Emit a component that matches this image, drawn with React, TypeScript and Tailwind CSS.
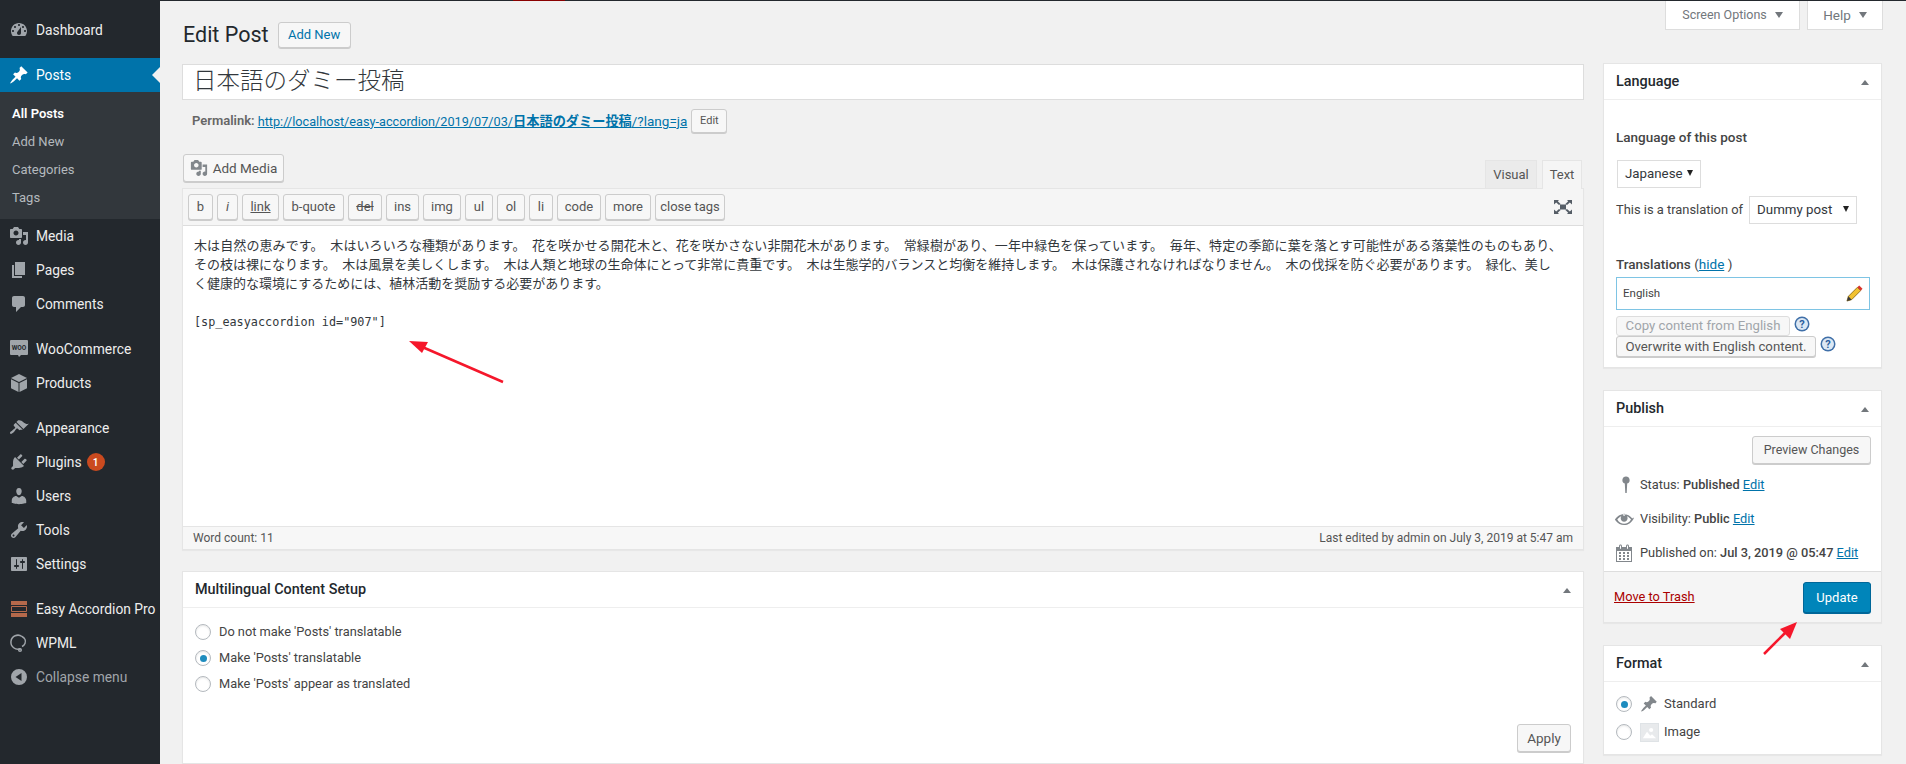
import type { ReactNode } from 'react';

// Dashicons style paths, 20x20 viewbox
const icons: Record<string, string> = {
    dashboard:
        'M3.76 16h12.48c1.1-1.37 1.76-3.11 1.76-5 0-4.42-3.58-8-8-8s-8 3.58-8 8c0 1.89.66 3.63 1.76 5zM10 4c.55 0 1 .45 1 1s-.45 1-1 1-1-.45-1-1 .45-1 1-1zM6 6c.55 0 1 .45 1 1s-.45 1-1 1-1-.45-1-1 .45-1 1-1zm8 0c.55 0 1 .45 1 1s-.45 1-1 1-1-.45-1-1 .45-1 1-1zm-5.37 5.55L12 7v6c0 1.1-.9 2-2 2s-2-.9-2-2c0-.57.24-1.08.63-1.45zM4 10c.55 0 1 .45 1 1s-.45 1-1 1-1-.45-1-1 .45-1 1-1zm12 0c.55 0 1 .45 1 1s-.45 1-1 1-1-.45-1-1 .45-1 1-1z',
    pin: 'M10.44 3.02l1.82-1.82 6.36 6.35-1.83 1.82c-1.05-.68-2.48-.57-3.41.36l-.75.75c-.92.93-1.04 2.35-.35 3.41l-1.83 1.82-2.41-2.41-2.8 2.79c-.42.42-3.38 2.71-3.8 2.29s1.86-3.39 2.28-3.81l2.79-2.79L4.1 9.36l1.83-1.82c1.05.69 2.48.57 3.4-.36l.75-.75c.93-.92 1.05-2.35.36-3.41z',
    media: 'M13 11V4c0-.55-.45-1-1-1h-1.67L9 1H5L3.67 3H2c-.55 0-1 .45-1 1v7c0 .55.45 1 1 1h10c.55 0 1-.45 1-1zM7 4.5c1.38 0 2.5 1.12 2.5 2.5S8.38 9.5 7 9.5 4.5 8.38 4.5 7 5.62 4.5 7 4.5zM14 6h5v10.5c0 1.38-1.12 2.5-2.5 2.5S14 17.88 14 16.5s1.12-2.5 2.5-2.5c.17 0 .34.02.5.05V9h-3V6zm-4 8.05V13h2v3.5c0 1.38-1.12 2.5-2.5 2.5S7 17.88 7 16.5 8.12 14 9.5 14c.17 0 .34.02.5.05z',
    pages: 'M6 15V2h10v13H6zm-1 1h8v2H3V5h2v11z',
    comments: 'M5 2h9c1.1 0 2 .9 2 2v7c0 1.1-.9 2-2 2h-2l-5 5v-5H5c-1.1 0-2-.9-2-2V4c0-1.1.9-2 2-2z',
    appearance:
        'M14.48 11.06L7.41 3.99l1.5-1.5c.5-.56 2.3-.47 3.51.32 1.21.8 1.43 1.28 2.91 2.1 1.18.64 2.45 1.26 4.45.85zm-.71.71L6.7 4.7 4.93 6.47c-.39.39-.39 1.02 0 1.41l1.06 1.06c.39.39.39 1.03 0 1.42-.6.6-1.43 1.11-2.21 1.69-.35.26-.7.53-1.01.84C1.43 13.23.4 14.8 1.2 15.6s2.37-.23 3.71-1.57c.31-.31.58-.66.84-1.01.58-.78 1.09-1.61 1.69-2.21.39-.39 1.02-.39 1.41 0l1.06 1.06c.39.39 1.02.39 1.41 0z',
    plugins:
        'M13.11 4.36L9.87 7.6 8 5.73l3.24-3.24c.35-.34 1.05-.2 1.56.32.52.51.66 1.21.31 1.55zm-8 1.77l.91-1.12 9.01 9.01-1.19.84c-.71.71-2.63 1.16-3.82 1.16H6.14L4.9 17.26c-.59.59-1.54.59-2.12 0-.59-.58-.59-1.53 0-2.12l1.24-1.24v-3.88c0-1.13.4-3.19 1.09-3.89zm7.26 3.97l3.24-3.24c.34-.35 1.04-.21 1.55.31.52.51.66 1.21.31 1.55l-3.24 3.25z',
    users: 'M10 9.25c-2.27 0-2.73-3.44-2.73-3.44C7 4.02 7.82 2 9.97 2c2.16 0 2.98 2.02 2.71 3.81 0 0-.41 3.44-2.68 3.44zm0 2.57L12.72 10c2.39 0 4.52 2.33 4.52 4.53v2.49s-3.65 1.13-7.24 1.13c-3.65 0-7.24-1.13-7.24-1.13v-2.49c0-2.25 1.94-4.48 4.47-4.48z',
    tools: 'M16.68 9.77c-1.34 1.34-3.3 1.67-4.95.99l-5.41 6.52c-.99.99-2.59.99-3.58 0s-.99-2.59 0-3.57l6.52-5.42c-.68-1.65-.35-3.61.99-4.95 1.28-1.28 3.12-1.62 4.72-1.06l-2.89 2.89 2.82 2.82 2.86-2.87c.53 1.58.18 3.39-1.08 4.65zM3.81 16.21c.4.39 1.04.39 1.43 0 .4-.4.4-1.04 0-1.43-.39-.4-1.03-.4-1.43 0-.39.39-.39 1.03 0 1.43z',
    settings:
        'M18 16V4c0-.55-.45-1-1-1H3c-.55 0-1 .45-1 1v12c0 .55.45 1 1 1h14c.55 0 1-.45 1-1zM8 11h1c.55 0 1 .45 1 1s-.45 1-1 1H8v1.5c0 .28-.22.5-.5.5s-.5-.22-.5-.5V13H6c-.55 0-1-.45-1-1s.45-1 1-1h1V5.5c0-.28.22-.5.5-.5s.5.22.5.5V11zm5-2h-1c-.55 0-1-.45-1-1s.45-1 1-1h1V5.5c0-.28.22-.5.5-.5s.5.22.5.5V7h1c.55 0 1 .45 1 1s-.45 1-1 1h-1v5.5c0 .28-.22.5-.5.5s-.5-.22-.5-.5V9z',
    collapse: 'M10 2a8 8 0 1 0 0 16 8 8 0 0 0 0-16zm2.5 4v8L6.5 10z',
    products: 'M10 1l8 4-8 4-8-4zM2 6.2l7.5 3.8v9L2 15.2zM18 6.2L10.5 10v9l7.5-3.8z',
    status: 'M10 1.5a3.6 3.6 0 0 1 1.2 7l-.5 9.5H9.3l-.5-9.5a3.6 3.6 0 0 1 1.2-7z',
    eye: 'M18.3 9.5C15 4.9 8.5 3.8 3.9 7.2c-1.2.9-2.2 2.1-3 3.4.2.4.5.8.8 1.2 3.3 4.6 9.6 5.6 14.2 2.4.9-.7 1.8-1.5 2.4-2.4.7-.8 1.2-1.6 1.5-2.5-.2-.3-.4-.6-.5-.8zm-8.2-4.7c.6 0 1 .4 1 1s-.4 1-1 1-1-.4-1-1 .5-1 1-1zm0 10c-2.7 0-5.1-1.3-6.8-4.2 1-1.5 2.4-2.7 4-3.4-.4.6-.6 1.3-.6 2 0 1.9 1.5 3.5 3.4 3.5s3.5-1.6 3.5-3.5c0-.7-.2-1.4-.6-2 1.6.7 3 1.9 4 3.4-1.7 2.9-4.2 4.2-6.9 4.2z',
    calendar:
        'M15 4h3v15H2V4h3V3c0-.41.15-.76.44-1.06.29-.29.65-.44 1.06-.44s.77.15 1.06.44c.29.3.44.65.44 1.06v1h4V3c0-.41.15-.76.44-1.06.29-.29.65-.44 1.06-.44s.77.15 1.06.44c.29.3.44.65.44 1.06v1zM6 3v2.5c0 .14.05.26.15.35.09.1.21.15.35.15s.26-.05.35-.15c.1-.09.15-.21.15-.35V3c0-.14-.05-.26-.15-.35-.09-.1-.21-.15-.35-.15s-.26.05-.35.15c-.1.09-.15.21-.15.35zm7 0v2.5c0 .14.05.26.14.35.1.1.22.15.36.15s.26-.05.36-.15c.09-.09.14-.21.14-.35V3c0-.14-.05-.26-.14-.35-.1-.1-.22-.15-.36-.15s-.26.05-.36.15c-.09.09-.14.21-.14.35zm4 15V8H3v10h14zM7 9v2H5V9h2zm2 0h2v2H9V9zm4 2V9h2v2h-2zm-6 1v2H5v-2h2zm2 0h2v2H9v-2zm4 2v-2h2v2h-2zm-6 1v2H5v-2h2zm4 2H9v-2h2v2zm4 0h-2v-2h2v2z',
};

function Dashicon({ name, className }: { name: string; className?: string }) {
    return (
        <svg viewBox="0 0 20 20" className={className} fill="currentColor">
            <path fillRule="evenodd" d={icons[name]} />
        </svg>
    );
}

function MenuItem({ icon, label, badge, active, dim }: { icon: ReactNode; label: string; badge?: string; active?: boolean; dim?: boolean }) {
    return (
        <div className={`flex h-[34px] items-center whitespace-nowrap text-[13.8px] ${active ? 'relative bg-[#0073aa] text-white' : dim ? 'text-[#a0a5aa]' : 'text-[#eeeeee]'}`}>
            <span className={`flex w-9 justify-center pl-[2px] ${active ? 'text-white' : 'text-[#a0a5aa]'}`}>{icon}</span>
            <span>{label}</span>
            {badge && (
                <span className="ml-[5px] flex h-[18px] w-[18px] items-center justify-center rounded-full bg-[#ca4a1f] text-[10px] font-semibold text-white">
                    {badge}
                </span>
            )}
            {active && (
                <span className="absolute right-0 top-[9px] h-0 w-0 border-y-[8px] border-r-[8px] border-y-transparent border-r-[#f1f1f1]" />
            )}
        </div>
    );
}

function Sidebar() {
    const ic = 'h-5 w-5';
    return (
        <aside className="w-40 shrink-0 bg-[#23282d] pt-[13px]">
            <MenuItem icon={<Dashicon name="dashboard" className={ic} />} label="Dashboard" />
            <div className="mt-[11px]">
                <MenuItem active icon={<Dashicon name="pin" className={ic} />} label="Posts" />
            </div>
            <div className="flex h-[127px] flex-col justify-center bg-[#32373c] text-[13px] text-[#b4b9be]">
                <div className="flex h-7 items-center pl-3 font-semibold text-white">All Posts</div>
                <div className="flex h-7 items-center pl-3">Add New</div>
                <div className="flex h-7 items-center pl-3">Categories</div>
                <div className="flex h-7 items-center pl-3">Tags</div>
            </div>
            <MenuItem icon={<Dashicon name="media" className={ic} />} label="Media" />
            <MenuItem icon={<Dashicon name="pages" className={ic} />} label="Pages" />
            <MenuItem icon={<Dashicon name="comments" className={ic} />} label="Comments" />
            <div className="mt-[11px]">
                <MenuItem
                    icon={
                        <svg viewBox="0 0 20 20" className={ic}>
                            <path d="M2 1h16a1 1 0 0 1 1 1v13a1 1 0 0 1-1 1h-6l-2 2-1-2H2a1 1 0 0 1-1-1V2a1 1 0 0 1 1-1z" fill="#a0a5aa" />
                            <text x="10" y="11" textAnchor="middle" fontSize="6.5" fontWeight="700" fill="#23282d">
                                WOO
                            </text>
                        </svg>
                    }
                    label="WooCommerce"
                />
            </div>
            <MenuItem icon={<Dashicon name="products" className={ic} />} label="Products" />
            <div className="mt-[11px]">
                <MenuItem icon={<Dashicon name="appearance" className={ic} />} label="Appearance" />
            </div>
            <MenuItem icon={<Dashicon name="plugins" className={ic} />} label="Plugins" badge="1" />
            <MenuItem icon={<Dashicon name="users" className={ic} />} label="Users" />
            <MenuItem icon={<Dashicon name="tools" className={ic} />} label="Tools" />
            <MenuItem icon={<Dashicon name="settings" className={ic} />} label="Settings" />
            <div className="mt-[11px]">
                <MenuItem
                    icon={
                        <svg viewBox="0 0 20 20" className={ic}>
                            <path d="M2 2h16v4H2zM2 14h16v4H2z" fill="#b5694b" />
                            <path d="M2.5 7.5h15v5h-15z" fill="none" stroke="#b5694b" />
                        </svg>
                    }
                    label="Easy Accordion Pro"
                />
            </div>
            <MenuItem
                icon={
                    <svg viewBox="0 0 20 20" className={ic} fill="none" stroke="#a0a5aa" strokeWidth="1.5">
                        <path d="M13 3.5a7 7 0 1 0-1.5 12.2M13 3.5c3 1.5 4 4.5 3 7-.6 1.5-1.8 2.5-3 3" />
                        <circle cx="11" cy="17" r="1.3" />
                    </svg>
                }
                label="WPML"
            />
            <MenuItem dim icon={<Dashicon name="collapse" className={ic} />} label="Collapse menu" />
        </aside>
    );
}

function Button({ children, className }: { children: ReactNode; className?: string }) {
    return (
        <div className={`flex items-center justify-center whitespace-nowrap rounded-[3px] border border-[#cccccc] bg-[#f7f7f7] shadow-[0_1px_0_#cccccc] ${className ?? 'text-[#555555]'}`}>
            {children}
        </div>
    );
}

function CaretUp() {
    return <span className="h-0 w-0 border-x-[4px] border-b-[5px] border-x-transparent border-b-[#72777c]" />;
}

function Radio({ checked }: { checked?: boolean }) {
    return (
        <span className="flex h-4 w-4 shrink-0 items-center justify-center rounded-full border border-[#b4b9be] bg-white shadow-[inset_0_1px_2px_rgba(0,0,0,0.1)]">
            {checked && <span className="h-[7px] w-[7px] rounded-full bg-[#1e8cbe]" />}
        </span>
    );
}

function BoxHeader({ title }: { title: string }) {
    return (
        <div className="flex h-9 items-center justify-between border-b border-[#eeeeee] pl-3 pr-3 pt-px">
            <span className="text-[14.4px] font-medium text-[#23282d]">{title}</span>
            <CaretUp />
        </div>
    );
}

function Box({ children, className }: { children: ReactNode; className?: string }) {
    return <div className={`border border-[#e5e5e5] bg-white shadow-[0_1px_1px_rgba(0,0,0,0.04)] ${className ?? ''}`}>{children}</div>;
}

function SelectBox({ label, className }: { label: string; className?: string }) {
    return (
        <div className={`flex h-7 items-center justify-between border border-[#dddddd] bg-white pl-[7px] pr-[7px] text-[13.3px] text-[#32373c] ${className ?? ''}`}>
            <span>{label}</span>
            <span className="mb-[3px] h-0 w-0 border-x-[3px] border-t-[6px] border-x-transparent border-t-[#222222]" />
        </div>
    );
}

function HelpIcon() {
    return (
        <svg viewBox="0 0 16 16" className="ml-1 h-4 w-4 shrink-0">
            <circle cx="8" cy="8" r="7.5" fill="#3f6fa8" />
            <circle cx="8" cy="8" r="6" fill="#dce8f4" />
            <text x="8" y="12" textAnchor="middle" fontSize="11" fontWeight="700" fill="#2b5f9e">
                ?
            </text>
        </svg>
    );
}

function Editor() {
    const tools = [
        ['b', 'w-[25px]'],
        ['i', 'w-[21px] italic'],
        ['link', 'w-[37px] underline'],
        ['b-quote', 'w-[61px]'],
        ['del', 'w-[34px] line-through'],
        ['ins', 'w-[33px]'],
        ['img', 'w-[38px]'],
        ['ul', 'w-[28px]'],
        ['ol', 'w-[28px]'],
        ['li', 'w-[24px]'],
        ['code', 'w-[44px]'],
        ['more', 'w-[46px]'],
        ['close tags', 'w-[70px]'],
    ];
    return (
        <>
            <div className="flex h-[34px] items-start justify-between">
                <Button className="ml-px h-7 w-[101px] gap-[5px] text-[13.5px] text-[#555555]">
                    <Dashicon name="media" className="h-[18px] w-[18px] text-[#82878c]" />
                    Add Media
                </Button>
                <div className="mt-[6px] flex h-7 items-start text-[13px] text-[#555555]">
                    <div className="flex h-[28px] w-[52px] items-center justify-center border border-b-0 border-[#e5e5e5] bg-[#ebebeb]">Visual</div>
                    <div className="z-10 ml-[5px] mr-[2px] flex h-[29px] w-[40px] items-center justify-center border border-b-0 border-[#e5e5e5] bg-[#f5f5f5]">Text</div>
                </div>
            </div>
            <div className="border border-[#e5e5e5] bg-white shadow-[0_1px_1px_rgba(0,0,0,0.04)]">
                <div className="flex h-[37px] items-center justify-between border-b border-[#dddddd] bg-[#f5f5f5] pl-[5px] pr-[11px]">
                    <div className="flex gap-1">
                        {tools.map(([label, cls]) => (
                            <Button key={label} className={`h-[26px] text-[13px] text-[#555555] ${cls}`}>
                                {label}
                            </Button>
                        ))}
                    </div>
                    <svg viewBox="0 0 18 14" className="h-[14px] w-[18px] text-[#555d66]" fill="currentColor">
                        <path d="M6 4.5h6v5H6zM0 0h5L3.8 1.3 6.6 4 5 5 2.2 2.6 0 4.4zM18 0h-5l1.2 1.3L11.4 4 13 5l2.8-2.4L18 4.4zM0 14h5l-1.2-1.3L6.6 10 5 9l-2.8 2.4L0 9.6zM18 14h-5l1.2-1.3L11.4 10 13 9l2.8 2.4L18 9.6z" />
                    </svg>
                </div>
                <div className="h-[300px] px-[11px] pt-[10px] font-['DejaVu_Sans_Mono','Noto_Sans_CJK_JP',monospace] text-[13px] leading-[19px] text-[#32373c] whitespace-pre">
                    <div className="tracking-[0.1px]">木は自然の恵みです。　木はいろいろな種類があります。　花を咲かせる開花木と、花を咲かさない非開花木があります。　常緑樹があり、一年中緑色を保っています。　毎年、特定の季節に葉を落とす可能性がある落葉性のものもあり、</div>
                    <div>その枝は裸になります。　木は風景を美しくします。　木は人類と地球の生命体にとって非常に貴重です。　木は生態学的バランスと均衡を維持します。　木は保護されなければなりません。　木の伐採を防ぐ必要があります。　緑化、美し</div>
                    <div>く健康的な環境にするためには、植林活動を奨励する必要があります。</div>
                    <div className="mt-[20px] text-[11.8px]">[sp_easyaccordion id="907"]</div>
                </div>
                <div className="flex h-[23px] items-center justify-between border-t border-[#e5e5e5] bg-[#f7f7f7] px-[10px] text-[12px] text-[#555555]">
                    <span>Word count: 11</span>
                    <span>Last edited by admin on July 3, 2019 at 5:47 am</span>
                </div>
            </div>
        </>
    );
}

function LeftColumn() {
    return (
        <div className="w-[1402px] shrink-0">
            <div className="flex h-[26px] items-center">
                <h1 className="ml-px text-[21.5px] leading-none text-[#23282d]">Edit Post</h1>
                <Button className="ml-[9px] h-[26px] w-[73px] text-[13px] text-[#0073aa]">Add New</Button>
            </div>
            <div className="mt-4 flex h-9 items-center border border-[#dddddd] bg-white pb-1 pl-[10px] font-['Noto_Sans_CJK_JP',sans-serif] text-[23.5px] font-light text-[#32373c]">
                日本語のダミー投稿
            </div>
            <div className="mt-[9px] flex h-6 items-center pl-[10px] text-[13px] text-[#666666]">
                <span className="font-semibold">Permalink:</span>
                <span className="ml-[3px] text-[12.7px] text-[#0073aa] underline">
                    http://localhost/easy-accordion/2019/07/03/<b className="font-['Noto_Sans_CJK_JP',sans-serif] text-[13.2px]">日本語のダミー投稿</b><span className="text-[13.5px]">/?lang=ja</span>
                </span>
                <Button className="ml-1 h-6 w-[36px] text-[11px] text-[#555555]">Edit</Button>
            </div>
            <div className="mt-[21px]">
                <Editor />
            </div>
            <Box className="mt-[21px]">
                <BoxHeader title="Multilingual Content Setup" />
                <div className="relative h-[155px] pl-3 pt-[11px] text-[12.8px] text-[#444444]">
                    {[
                        ["Do not make 'Posts' translatable", false],
                        ["Make 'Posts' translatable", true],
                        ["Make 'Posts' appear as translated", false],
                    ].map(([label, checked]) => (
                        <div key={label as string} className="flex h-[26px] items-center gap-2">
                            <Radio checked={checked as boolean} />
                            {label}
                        </div>
                    ))}
                    <Button className="absolute bottom-[11px] right-[12px] h-7 w-[54px] text-[13.5px] text-[#555555]">Apply</Button>
                </div>
            </Box>
        </div>
    );
}

function RightColumn() {
    return (
        <div className="w-[279px] shrink-0 pt-[41px]">
            <Box>
                <BoxHeader title="Language" />
                <div className="h-[267px] pl-3 pr-3 pt-[27px] text-[12.9px] text-[#444444]">
                    <div className="text-[13.5px] font-medium leading-5">Language of this post</div>
                    <SelectBox label="Japanese" className="ml-px mt-[13px] w-[84px]" />
                    <div className="mt-2 flex items-center whitespace-nowrap">
                        <span>This is a translation of</span>
                        <SelectBox label="Dummy post" className="ml-[6px] w-[108px]" />
                    </div>
                    <div className="mt-[30px] text-[13.5px] font-medium leading-5">
                        Translations <span className="font-normal">(<span className="text-[#0073aa] underline">hide</span> )</span>
                    </div>
                    <div className="mt-[3px] flex h-[33px] w-[254px] items-center justify-between border border-[#7ec4e4] pl-[6px] pr-[6px] text-[11.5px]">
                        <span>English</span>
                        <svg viewBox="0 0 18 18" className="h-[17px] w-[17px]">
                            <path d="M1 17l1.5-5L12 2.5l3.5 3.5L6 15.5z" fill="#f2c230" stroke="#7a5c10" strokeWidth="0.8" />
                            <path d="M12 2.5l2-2 3.5 3.5-2 2z" fill="#d9342b" />
                            <path d="M1 17l1.5-5 3.5 3.5z" fill="#3a3a3a" />
                        </svg>
                    </div>
                    <div className="mt-[6px] flex items-start">
                        <div className="flex h-5 w-[174px] items-center justify-center whitespace-nowrap rounded-[3px] border border-[#dddddd] bg-[#f7f7f7] text-[13.2px] text-[#a0a5aa]">
                            Copy content from English
                        </div>
                        <HelpIcon />
                    </div>
                    <div className="flex items-start">
                        <Button className="h-[21px] w-[200px] text-[13.2px] text-[#555555]">Overwrite with English content.</Button>
                        <HelpIcon />
                    </div>
                </div>
            </Box>
            <Box className="mt-[22px]">
                <BoxHeader title="Publish" />
                <div className="h-[144px] px-[10px] pt-[9px] text-[12.8px] text-[#444444]">
                    <div className="flex justify-end">
                        <Button className="h-7 w-[119px] text-[12.5px] text-[#555555]">Preview Changes</Button>
                    </div>
                    <div className="relative mt-1 flex h-[34px] items-center whitespace-nowrap pl-[26px]">
                        <Dashicon name="status" className="absolute left-[2px] h-5 w-5 text-[#82878c]" />
                        Status:&nbsp;<b className="font-medium">Published</b>&nbsp;<span className="text-[#0073aa] underline">Edit</span>
                    </div>
                    <div className="relative flex h-[34px] items-center whitespace-nowrap pl-[26px]">
                        <Dashicon name="eye" className="absolute left-0 h-5 w-5 text-[#82878c]" />
                        Visibility:&nbsp;<b className="font-medium">Public</b>&nbsp;<span className="text-[#0073aa] underline">Edit</span>
                    </div>
                    <div className="relative flex h-[34px] items-center whitespace-nowrap pl-[26px]">
                        <Dashicon name="calendar" className="absolute left-0 h-5 w-5 text-[#82878c]" />
                        Published on:&nbsp;<b className="font-medium">Jul 3, 2019 @ 05:47</b>&nbsp;<span className="text-[#0073aa] underline">Edit</span>
                    </div>
                </div>
                <div className="flex h-[51px] items-center justify-between border-t border-[#dddddd] bg-[#f5f5f5] pl-[10px] pr-[10px] text-[12.8px]">
                    <span className="text-[#aa0000] underline">Move to Trash</span>
                    <div className="mt-px flex h-[31px] w-[68px] items-center justify-center rounded-[3px] border border-[#006799] bg-[#0085ba] text-[13px] text-white shadow-[0_1px_0_#006799]">
                        Update
                    </div>
                </div>
            </Box>
            <Box className="mt-[22px]">
                <BoxHeader title="Format" />
                <div className="h-[72px] pl-3 pt-[8px] text-[13px] text-[#444444]">
                    <div className="flex h-[28px] items-center">
                        <Radio checked />
                        <Dashicon name="pin" className="ml-2 h-[18px] w-[18px] text-[#82878c]" />
                        <span className="ml-[6px]">Standard</span>
                    </div>
                    <div className="flex h-[28px] items-center">
                        <Radio />
                        <span className="ml-2 flex h-[19px] w-[19px] items-center justify-center border border-[#dfe3e6] bg-[#e8eaec]">
                            <svg viewBox="0 0 18 18" className="h-[15px] w-[15px]" fill="#ffffff">
                                <circle cx="11" cy="6" r="2.5" />
                                <path d="M1 16l5-8 4 5 2-2 5 5z" />
                            </svg>
                        </span>
                        <span className="ml-[5px]">Image</span>
                    </div>
                </div>
            </Box>
        </div>
    );
}

export default function App() {
    return (
        <div className="relative flex h-[764px] w-[1906px] overflow-hidden bg-[#f1f1f1] font-['Roboto','Noto_Sans_CJK_JP',sans-serif] text-[#444444]">
            <div className="absolute left-0 top-0 z-20 h-px w-full bg-[#23282d]" />
            <div className="absolute left-[513px] top-0 z-20 h-px w-[52px] bg-[#8a0000]" />
            <Sidebar />
            <main className="min-w-0 flex-1 pl-[22px]">
                <div className="flex h-[30px] justify-end gap-[7px] pr-[23px] pt-px text-[12.5px] text-[#72777c]">
                    <div className="flex h-[29px] w-[135px] items-center justify-center gap-2 border border-t-0 border-[#dddddd] bg-white">
                        Screen Options
                        <span className="h-0 w-0 border-x-[4px] border-t-[6px] border-x-transparent border-t-[#72777c]" />
                    </div>
                    <div className="flex h-[29px] w-[76px] items-center justify-center gap-2 border border-t-0 border-[#dddddd] bg-white text-[13.5px]">
                        Help
                        <span className="h-0 w-0 border-x-[4px] border-t-[6px] border-x-transparent border-t-[#72777c]" />
                    </div>
                </div>
                <div className="-mt-2 flex gap-[19px]">
                    <LeftColumn />
                    <RightColumn />
                </div>
            </main>
            {/* red annotation arrows drawn over the screenshot */}
            <svg className="pointer-events-none absolute left-0 top-0 z-30 h-[764px] w-[1906px]" viewBox="0 0 1906 764">
                <path d="M503 382L420 346" stroke="#f5172b" strokeWidth="2.5" />
                <path d="M409 341L428 342L422 353Z" fill="#f5172b" />
                <path d="M1764 654L1785 633" stroke="#f5172b" strokeWidth="2.5" />
                <path d="M1797 622L1790 639L1780 629Z" fill="#f5172b" />
            </svg>
        </div>
    );
}
